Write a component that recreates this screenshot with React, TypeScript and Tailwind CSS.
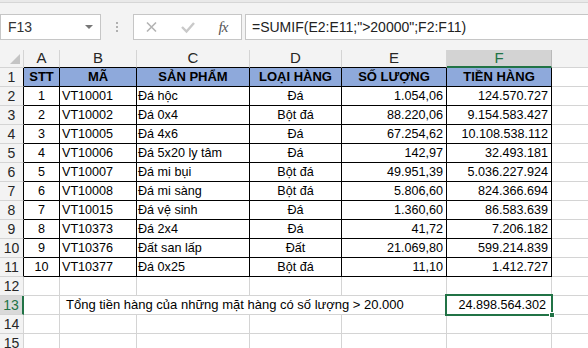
import React from "react";

const COLS = [
  { key: "A", w: "w-[36px]" },
  { key: "B", w: "w-[77px]" },
  { key: "C", w: "w-[113px]" },
  { key: "D", w: "w-[92px]" },
  { key: "E", w: "w-[105px]" },
  { key: "F", w: "w-[105px]" },
  { key: "G", w: "w-[76px]" },
];

const rows = [
  ["1", "VT10001", "Đá hộc", "Đá", "1.054,06", "124.570.727"],
  ["2", "VT10002", "Đá 0x4", "Bột đá", "88.220,06", "9.154.583.427"],
  ["3", "VT10005", "Đá 4x6", "Đá", "67.254,62", "10.108.538.112"],
  ["4", "VT10006", "Đá 5x20 ly tâm", "Đá", "142,97", "32.493.181"],
  ["5", "VT10007", "Đá mi bụi", "Bột đá", "49.951,39", "5.036.227.924"],
  ["6", "VT10008", "Đá mi sàng", "Bột đá", "5.806,60", "824.366.694"],
  ["7", "VT10015", "Đá vệ sinh", "Đá", "1.360,60", "86.583.639"],
  ["8", "VT10373", "Đá 2x4", "Đá", "41,72", "7.206.182"],
  ["9", "VT10376", "Đất san lấp", "Đất", "21.069,80", "599.214.839"],
  ["10", "VT10377", "Đá 0x25", "Bột đá", "11,10", "1.412.727"],
];

const headers = ["STT", "MÃ", "SẢN PHẨM", "LOẠI HÀNG", "SỐ LƯỢNG", "TIỀN HÀNG"];
const aligns = ["justify-center", "justify-start pl-[2px]", "justify-start pl-[1px]", "justify-center", "justify-end pr-[3px]", "justify-end pr-[3px]"];

function RowHeader({ n, inTable, active }: { n: number; inTable?: boolean; active?: boolean }) {
  return (
    <div
      className={`w-[24px] shrink-0 h-[19px] flex items-center justify-center text-[14px] border-b border-b-[#d4d4d4] ${
        active
          ? "bg-[#d9d9d9] text-[#217346] border-r-2 border-r-[#217346]"
          : inTable
          ? "bg-[#f3f3f3] text-[#262626] border-r border-r-black"
          : "bg-[#f3f3f3] text-[#262626] border-r border-r-[#d4d4d4]"
      }`}
    >
      {n}
    </div>
  );
}

function EmptyRow({ n, active }: { n: number; active?: boolean }) {
  return (
    <div className="flex">
      <RowHeader n={n} active={active} />
      {COLS.map((c) => (
        <div key={c.key} className={`${c.w} shrink-0 h-[19px] border-r border-b border-[#d4d4d4]`} />
      ))}
    </div>
  );
}

export default function App() {
  return (
    <div
      className="w-[588px] h-[348px] overflow-hidden bg-white text-black"
      style={{ fontFamily: '"Liberation Sans", Arial, sans-serif' }}
    >
      {/* formula bar */}
      <div className="h-[50px] bg-[#f3f3f3] flex flex-col">
        <div className="h-[3px] bg-[#e9e9e9] border-b border-[#d6d6d6]" />
        <div className="flex items-start pt-[11px] h-[47px]">
          <div className="w-[101px] h-[26px] bg-white border border-[#c6c6c6] flex items-center justify-between pl-[7px] pr-[7px] text-[14px] text-[#333]">
            <span>F13</span>
            <span className="w-0 h-0 border-l-[4px] border-r-[4px] border-t-[4px] border-l-transparent border-r-transparent border-t-[#777]" />
          </div>
          <div className="w-[32px] h-[26px] flex flex-col items-center justify-center gap-[2px]">
            <span className="w-[2px] h-[2px] bg-[#b0b0b0]" />
            <span className="w-[2px] h-[2px] bg-[#b0b0b0]" />
            <span className="w-[2px] h-[2px] bg-[#b0b0b0]" />
          </div>
          <div className="w-[109px] h-[26px] bg-white border border-[#c6c6c6] flex items-center">
            <svg width="36" height="24" viewBox="0 0 36 24" className="shrink-0">
              <path d="M13 7.5 L22 16.5 M22 7.5 L13 16.5" stroke="#b3b3b3" strokeWidth="1.6" fill="none" />
            </svg>
            <svg width="36" height="24" viewBox="0 0 36 24" className="shrink-0">
              <path d="M12 12 L16.5 16.5 L24 8" stroke="#c9c9c9" strokeWidth="2.4" fill="none" />
            </svg>
            <span
              className="w-[34px] text-center italic text-[15px] text-[#555] tracking-[-1px]"
              style={{ fontFamily: '"Liberation Serif", "Times New Roman", serif' }}
            >
              fx
            </span>
          </div>
          <div className="ml-[3px] flex-1 h-[26px] bg-white border border-r-0 border-[#c6c6c6] flex items-center pl-[6px] text-[14px] text-[#222] whitespace-nowrap">
            =SUMIF(E2:E11;"&gt;20000";F2:F11)
          </div>
        </div>
      </div>

      {/* column headers */}
      <div className="flex h-[18px]">
        <div className="w-[24px] shrink-0 bg-[#f3f3f3] border-r border-b border-[#d4d4d4] flex items-end justify-end p-[3px]">
          <span className="w-0 h-0 border-l-[10px] border-b-[10px] border-l-transparent border-b-[#c4c4c4]" />
        </div>
        {COLS.map((c) => {
          const sel = c.key === "F";
          const table = c.key !== "G";
          return (
            <div
              key={c.key}
              className={`${c.w} shrink-0 flex items-center justify-center text-[15px] border-r ${
                sel
                  ? "bg-[#d3d3d3] text-[#217346] border-b-2 border-b-[#217346] border-r-[#b9b9b9]"
                  : table
                  ? "bg-[#f3f3f3] text-[#262626] border-b border-b-black border-r-[#d4d4d4]"
                  : "bg-[#f3f3f3] text-[#262626] border-b border-b-[#d4d4d4] border-r-[#d4d4d4] pl-[22px]"
              }`}
            >
              {c.key}
            </div>
          );
        })}
      </div>

      {/* row 1: headers */}
      <div className="flex">
        <RowHeader n={1} inTable />
        {headers.map((h, i) => (
          <div
            key={h}
            className={`${COLS[i].w} shrink-0 h-[19px] bg-[#8ea9db] border-r border-b border-black flex items-center justify-center font-bold text-[13px] whitespace-nowrap overflow-hidden`}
          >
            {h}
          </div>
        ))}
        <div className="w-[76px] shrink-0 h-[19px] border-r border-b border-[#d4d4d4]" />
      </div>

      {/* data rows */}
      {rows.map((r, ri) => (
        <div key={ri} className="flex">
          <RowHeader n={ri + 2} inTable />
          {r.map((v, i) => (
            <div
              key={i}
              className={`${COLS[i].w} shrink-0 h-[19px] border-r border-b border-black flex items-center text-[12.6px] whitespace-nowrap overflow-hidden ${aligns[i]}`}
            >
              {v}
            </div>
          ))}
          <div className="w-[76px] shrink-0 h-[19px] border-r border-b border-[#d4d4d4]" />
        </div>
      ))}

      <EmptyRow n={12} />

      {/* row 13: summary */}
      <div className="flex">
        <RowHeader n={13} active />
        <div className="w-[36px] shrink-0 h-[19px] border-r border-b border-[#d4d4d4]" />
        <div className="w-[387px] shrink-0 h-[19px] border-r border-b border-[#d4d4d4] flex items-center pl-[6px] text-[13px] whitespace-nowrap">
          Tổng tiền hàng của những mặt hàng có số lượng &gt; 20.000
        </div>
        <div className="relative w-[105px] shrink-0 h-[19px] border-r border-b border-[#d4d4d4] flex items-center justify-end pr-[5px] text-[12.6px]">
          24.898.564.302
          <div className="absolute left-[-2px] top-[-2px] w-[108px] h-[22px] border-2 border-[#217346]" />
          <div className="absolute right-[-4px] bottom-[-4px] w-[6px] h-[6px] bg-[#217346] border border-white" />
        </div>
        <div className="w-[76px] shrink-0 h-[19px] border-r border-b border-[#d4d4d4]" />
      </div>

      <EmptyRow n={14} />
      <EmptyRow n={15} />
    </div>
  );
}
